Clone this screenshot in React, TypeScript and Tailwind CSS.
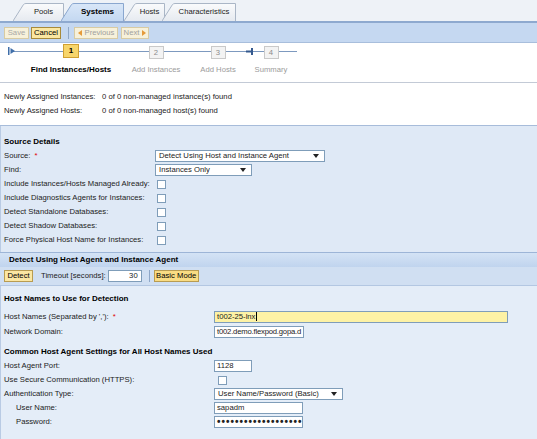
import type { ReactNode } from "react";

// SAP-style guided procedure: "Find Instances/Hosts" step

function Tab({
  label,
  w,
  selected,
  className,
}: {
  label: string;
  w: number;
  selected?: boolean;
  className: string;
}) {
  const id = `tab-${label}`;
  return (
    <div className={`relative h-[18px] ${className} ${selected ? "z-10" : ""}`}>
      <svg className="absolute inset-0" width={w} height={18} viewBox={`0 0 ${w} 18`}>
        <defs>
          <linearGradient id={id} x1="0" y1="0" x2="0" y2="1">
            <stop offset="0" stopColor={selected ? "#d9e7f8" : "#fafbfc"} />
            <stop offset="1" stopColor={selected ? "#c4d8f1" : "#e6eaf0"} />
          </linearGradient>
        </defs>
        <path
          d={`M0 18 L10.5 1.5 Q11.5 0.5 13 0.5 L${w - 0.5} 0.5 L${w - 0.5} 18`}
          fill={`url(#${id})`}
          stroke={selected ? "#8aa7cf" : "#aab6c6"}
        />
      </svg>
      <div
        className={`relative flex h-full items-center justify-center pl-[10px] ${
          selected ? "text-[8px] font-bold text-black" : "text-[#222]"
        }`}
      >
        {label}
      </div>
    </div>
  );
}

function Btn({ children, className }: { children: ReactNode; className: string }) {
  return (
    <div className={`flex h-[12px] items-center justify-center gap-[3px] border ${className}`}>
      {children}
    </div>
  );
}

function Sep({ className }: { className: string }) {
  return <div className={`h-[12px] w-px bg-[#8ea7c8] ${className}`} />;
}

function Select({ value, className }: { value: string; className: string }) {
  return (
    <div
      className={`flex h-[12px] items-center justify-between border border-[#7f9db9] bg-white pl-[3px] pr-[5px] ${className}`}
    >
      <span className="leading-none">{value}</span>
      <svg width="6" height="4" viewBox="0 0 6 4">
        <path d="M0 0h6L3 4z" fill="#222" />
      </svg>
    </div>
  );
}

function Input({ value, className, children }: { value?: string; className: string; children?: ReactNode }) {
  return (
    <div
      className={`flex h-[12px] items-center overflow-hidden whitespace-nowrap border border-[#7f9db9] pl-[2px] ${className}`}
    >
      {value}
      {children}
    </div>
  );
}

function Check({ className = "" }: { className?: string }) {
  return <div className={`h-[9px] w-[9px] border border-[#7f9db9] bg-white ${className}`} />;
}

function Row({
  label,
  children,
  labelW,
  req,
  h = "h-[14px]",
}: {
  label: string;
  children: ReactNode;
  labelW: string;
  req?: boolean;
  h?: string;
}) {
  return (
    <div className={`flex items-center ${h}`}>
      <div className={`shrink-0 ${labelW}`}>
        {label}
        {req && <span className="ml-[4px] text-[#e00000]">*</span>}
      </div>
      {children}
    </div>
  );
}

function Step({
  n,
  label,
  active,
  className,
}: {
  n: string;
  label: string;
  active?: boolean;
  className: string;
}) {
  return (
    <div className={`flex flex-col items-center ${className}`}>
      {active ? (
        <div className="mt-[1px] flex h-[14px] w-[16px] items-center justify-center border border-[#d1a031] bg-[#f7d56b] text-[8px] font-bold text-black">
          {n}
        </div>
      ) : (
        <div className="mt-[3px] flex h-[13px] w-[15px] items-center justify-center border border-[#c9c9c9] bg-[#f3f3f3] text-[#8c8c8c]">
          {n}
        </div>
      )}
      <div
        className={`whitespace-nowrap leading-[10px] ${
          active ? "mt-[7px] text-[8px] font-bold text-black" : "mt-[6px] text-[#9b9b9b]"
        }`}
      >
        {label}
      </div>
    </div>
  );
}

export default function App() {
  return (
    <div className="flex min-h-[439px] w-[537px] flex-col bg-white font-['Liberation_Sans',Arial,sans-serif] text-[7.7px] leading-none text-[#222]">
      {/* Tab strip */}
      <div className="flex h-[21px] items-end bg-[#eef2f7] pl-[13px]">
        <Tab label="Pools" w={51} className="w-[51px]" />
        <Tab label="Systems" w={63} selected className="-ml-[3px] w-[63px]" />
        <Tab label="Hosts" w={41} className="w-[41px]" />
        <Tab label="Characteristics" w={74} className="-ml-[3px] w-[74px]" />
      </div>

      {/* Toolbar */}
      <div className="flex h-[22px] items-center border-t-2 border-b border-t-[#8ea9cf] border-b-[#a8bedc] bg-[#c5d8f1] pl-[4px]">
        <Btn className="w-[25px] border-[#d8cba3] bg-[#f7f1da] text-[#a8a8a8]">Save</Btn>
        <Btn className="ml-[2px] w-[30px] border-[#a88a3a] bg-[#fbe7a1] text-black">Cancel</Btn>
        <Sep className="ml-[7px]" />
        <Btn className="ml-[5px] w-[44px] border-[#d8cba3] bg-[#f7f1da] text-[#a0a0a0]">
          <svg width="4" height="6" viewBox="0 0 4 6">
            <path d="M4 0v6L0 3z" fill="#e59a3a" />
          </svg>
          Previous
        </Btn>
        <Btn className="ml-[3px] w-[28px] border-[#d8cba3] bg-[#f7f1da] text-[#a0a0a0]">
          Next
          <svg width="4" height="6" viewBox="0 0 4 6">
            <path d="M0 0v6L4 3z" fill="#e59a3a" />
          </svg>
        </Btn>
      </div>

      {/* Roadmap */}
      <div className="relative h-[40px] border-b border-[#c3cad6]">
        <div className="absolute left-[12px] top-[8px] h-px w-[285px] bg-[#7d99bf]" />
        <svg className="absolute left-[8px] top-[4px]" width="7" height="8" viewBox="0 0 7 8">
          <rect x="0" y="0" width="1.5" height="8" fill="#3f6ea9" />
          <path d="M2.5 1L7 4L2.5 7z" fill="#3f6ea9" />
        </svg>
        <svg className="absolute left-[246px] top-[5px]" width="7" height="7" viewBox="0 0 7 7">
          <rect x="0" y="2.5" width="5" height="2" fill="#34598e" />
          <rect x="5" y="0" width="2" height="7" fill="#34598e" />
        </svg>
        <div className="relative flex pl-[28px]">
          <Step n="1" label="Find Instances/Hosts" active className="w-[86px]" />
          <Step n="2" label="Add Instances" className="w-[84px]" />
          <Step n="3" label="Add Hosts" className="w-[40px]" />
          <Step n="4" label="Summary" className="ml-[12px] w-[42px]" />
        </div>
      </div>

      {/* Counts */}
      <div className="h-[43px] border-b border-[#a7bcda] pl-[4px] pt-[7px]">
        <Row label="Newly Assigned Instances:" labelW="w-[98px]">
          0 of 0 non-managed instance(s) found
        </Row>
        <Row label="Newly Assigned Hosts:" labelW="w-[98px]">
          0 of 0 non-managed host(s) found
        </Row>
      </div>

      {/* Source details */}
      <div className="border-l border-[#b9cbe4] bg-[#dfe9f6] pb-[5px] pl-[3px] pt-[9px]">
        <div className="flex h-[14px] items-center text-[8px] font-bold text-black">Source Details</div>
        <Row label="Source:" req labelW="w-[151px]">
          <Select value="Detect Using Host and Instance Agent" className="w-[170px]" />
        </Row>
        <Row label="Find:" labelW="w-[151px]">
          <Select value="Instances Only" className="w-[97px]" />
        </Row>
        <Row label="Include Instances/Hosts Managed Already:" labelW="w-[153px]">
          <Check />
        </Row>
        <Row label="Include Diagnostics Agents for Instances:" labelW="w-[153px]">
          <Check />
        </Row>
        <Row label="Detect Standalone Databases:" labelW="w-[153px]">
          <Check />
        </Row>
        <Row label="Detect Shadow Databases:" labelW="w-[153px]">
          <Check />
        </Row>
        <Row label="Force Physical Host Name for Instances:" labelW="w-[153px]">
          <Check />
        </Row>
      </div>

      {/* Detect header */}
      <div className="flex h-[15px] items-center border-t border-[#9db5d7] bg-gradient-to-b from-[#d4e3f5] to-[#c0d4ee] pl-[9px] text-[8px] font-bold text-black">
        Detect Using Host Agent and Instance Agent
      </div>
      <div className="flex h-[19px] items-center border-b border-[#b3c7e2] bg-[#d0dff2] pl-[4px]">
        <Btn className="w-[29px] border-[#b89c52] bg-[#fbe7a3] text-black">Detect</Btn>
        <span className="ml-[8px]">Timeout [seconds]:</span>
        <Input className="ml-[2px] w-[34px] justify-end bg-white pr-[3px]" value="30" />
        <Sep className="ml-[7px]" />
        <Btn className="ml-[4px] w-[45px] border-[#b89c52] bg-[#f9dc83] text-black">Basic Mode</Btn>
      </div>

      {/* Host names */}
      <div className="flex-1 border-l border-[#b9cbe4] bg-[#e4edf8] pl-[3px] pt-[6px]">
        <div className="flex h-[14px] items-center text-[8px] font-bold text-black">
          Host Names to Use for Detection
        </div>
        <div className="mt-[3px]">
          <Row label="Host Names (Separated by ','):" req labelW="w-[210px]" h="h-[15px]">
            <Input className="w-[294px] bg-[#fdf2a5]" value="t002-25-lnx">
              <span className="ml-px h-[9px] w-px bg-black" />
            </Input>
          </Row>
          <Row label="Network Domain:" labelW="w-[210px]" h="h-[15px]">
            <Input className="w-[90px] bg-white tracking-[-0.2px]" value="t002.demo.flexpod.gopa.d" />
          </Row>
        </div>
        <div className="mt-[6px] flex h-[14px] items-center text-[8px] font-bold text-black">
          Common Host Agent Settings for All Host Names Used
        </div>
        <Row label="Host Agent Port:" labelW="w-[210px]">
          <Input className="w-[38px] bg-white" value="1128" />
        </Row>
        <Row label="Use Secure Communication (HTTPS):" labelW="w-[210px]">
          <Check className="ml-[4px]" />
        </Row>
        <Row label="Authentication Type:" labelW="w-[210px]">
          <Select value="User Name/Password (Basic)" className="w-[129px]" />
        </Row>
        <div className="pl-[12px]">
          <Row label="User Name:" labelW="w-[198px]">
            <Input className="w-[89px] bg-white" value="sapadm" />
          </Row>
          <Row label="Password:" labelW="w-[198px]">
            <Input className="w-[89px] bg-white text-[10px] font-bold tracking-[1px]" value="•••••••••••••••••••" />
          </Row>
        </div>
      </div>
    </div>
  );
}
